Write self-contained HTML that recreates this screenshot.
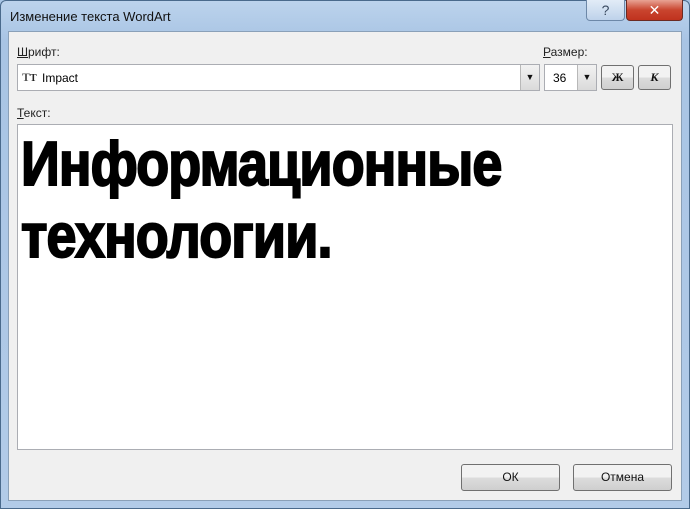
<!DOCTYPE html>
<html><head><meta charset="utf-8"><style>
*{margin:0;padding:0;box-sizing:border-box}
body{width:690px;height:509px;overflow:hidden;background:#a9c6e6;font-family:"Liberation Sans",sans-serif;font-size:12px;position:relative}
.frame{position:absolute;left:0;top:0;width:690px;height:509px;background:linear-gradient(#bcd3ec,#a8c4e4 40px,#b2cbe8);border:1px solid #4a6a8c;border-radius:6px 6px 0 0}
.title{position:absolute;left:10px;top:9px;font-size:13px;color:#111}
.help{position:absolute;left:586px;top:0;width:39px;height:21px;border:1px solid #6d88a8;border-top:none;border-radius:0 0 4px 4px;background:linear-gradient(#e2ecf7,#bed2ea);text-align:center;font-size:14px;color:#3a4a60;line-height:20px}
.close{position:absolute;left:626px;top:0;width:57px;height:21px;border:1px solid #6b2a22;border-top:none;border-radius:0 0 4px 4px;background:linear-gradient(#e8a394,#c9452f 50%,#c0321e);text-align:center;color:#fff;font-size:14px;line-height:20px}
.panel{position:absolute;left:8px;top:31px;width:674px;height:470px;background:#f0f0f0;border:1px solid #8aa0b8}
.lbl{position:absolute;font-size:12px;color:#222}
.lbl u{text-decoration:underline}
.combo{position:absolute;background:#fff;border:1px solid #abadb3}
.dd{position:absolute;top:0;right:0;width:19px;height:100%;border-left:1px solid #b8b8b8;background:linear-gradient(#f2f2f2,#dadada);font-size:9px;text-align:center;line-height:25px;color:#111}
.btn{position:absolute;border:1px solid #707070;border-radius:3px;background:linear-gradient(#f2f2f2 50%,#dcdcdc 50%,#cfcfcf);text-align:center;color:#111}
.text{position:absolute;left:17px;top:124px;width:656px;height:326px;background:#fff;border:1px solid #abadb3;overflow:hidden}
.big{position:absolute;left:3px;white-space:nowrap;font-weight:bold;font-size:62px;line-height:62px;color:#000;transform-origin:0 0;-webkit-text-stroke:2px #000;letter-spacing:-1px}
</style></head><body>
<div class="frame"></div>
<div class="title">Изменение текста WordArt</div>
<div class="help">?</div>
<div class="close">✕</div>
<div class="panel"></div>
<div class="lbl" style="left:17px;top:45px"><u>Ш</u>рифт:</div>
<div class="lbl" style="left:543px;top:45px"><u>Р</u>азмер:</div>
<div class="combo" style="left:17px;top:64px;width:523px;height:27px">
 <span style="position:absolute;left:4px;top:5px;font-family:'Liberation Serif',serif;font-weight:bold;font-size:12px;color:#555">T<span style="font-size:10px;color:#222">T</span></span>
 <span style="position:absolute;left:24px;top:6px;font-size:12px">Impact</span>
 <div class="dd">▼</div>
</div>
<div class="combo" style="left:544px;top:64px;width:53px;height:27px">
 <span style="position:absolute;left:8px;top:6px">36</span>
 <div class="dd">▼</div>
</div>
<div class="btn" style="left:601px;top:65px;width:33px;height:25px;line-height:23px;font-family:'Liberation Serif',serif;font-weight:bold">Ж</div>
<div class="btn" style="left:638px;top:65px;width:33px;height:25px;line-height:23px;font-family:'Liberation Serif',serif;font-weight:bold;font-style:italic">К</div>
<div class="lbl" style="left:17px;top:106px"><u>Т</u>екст:</div>
<div class="text">
 <div class="big" style="top:9px;transform:scale(0.87,1)">Информационные</div>
 <div class="big" style="top:81px;transform:scale(0.87,1)">технологии.</div>
</div>
<div class="btn" style="left:461px;top:464px;width:99px;height:27px;line-height:25px">ОК</div>
<div class="btn" style="left:573px;top:464px;width:99px;height:27px;line-height:25px">Отмена</div>
</body></html>
